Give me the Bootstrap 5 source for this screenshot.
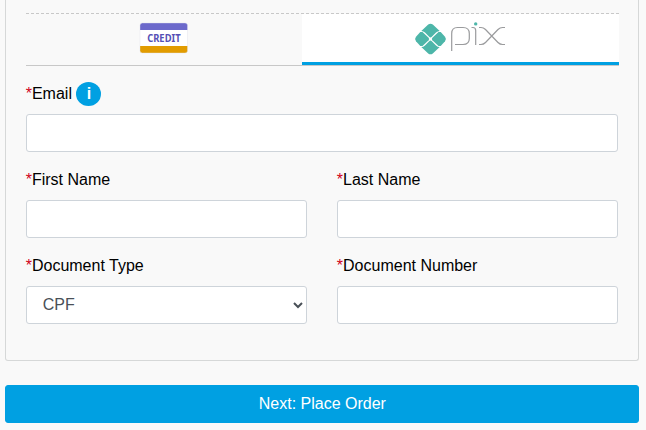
<!DOCTYPE html>
<html lang="en">
<head>
<meta charset="utf-8">
<meta name="viewport" content="width=device-width, initial-scale=1">
<title>Payment</title>
<link href="https://cdn.jsdelivr.net/npm/bootstrap@5.3.0/dist/css/bootstrap.min.css" rel="stylesheet">
<style>
body{font-family:"Liberation Sans",Arial,sans-serif;background:#f9f9f9;color:#000;overflow:hidden}
.checkout{width:634.3px;margin-left:4.7px}
.panel{height:361px;padding:13px 20px 0;border:1px solid #d6d8d8;border-top:0;border-radius:0 0 3px 3px}
.pay-tabs{width:593px;height:53px;border-top:1px dashed #c8c8c8;border-bottom:1px solid #c8c8c8;margin-bottom:16px}
.pay-tab{border:0;background:transparent;padding:0;display:flex;align-items:flex-start}
.pay-tab.credit{width:276px}
.pay-tab.pix{width:317px;background:#fff;border-bottom:3px solid #00a0e2}
.form-label{line-height:24px;color:#000}
.req{color:#d0021b}
.form-control{height:38px;border:1px solid #ced4da;border-radius:3px;color:#495057}
select.form-control{appearance:auto;background:#fff;padding-top:5px;padding-bottom:7px}
.info{width:25px;height:24px;background:#00a0e2;color:#fff;font-weight:700;font-size:16px;line-height:24px;padding-left:1px}
.fields{--bs-gutter-x:30px}
.btn-next{height:38px;margin-top:24px;background:#00a0e2;border-color:#00a0e2;color:#fff;border-radius:3px;padding-left:13px}
.credit-word{font:700 10.6px "Noto Sans","Open Sans",sans-serif}
</style>
</head>
<body>
<main class="checkout">
  <section class="panel">
    <div class="pay-tabs d-flex">
      <button type="button" class="pay-tab credit" aria-label="Credit">
        <svg width="276" height="48" viewBox="26 14 276 48">
          <clipPath id="cc"><rect x="140" y="23" width="47.500" height="30" rx="2.500"/></clipPath>
          <g clip-path="url(#cc)"><path fill="#fff" d="M140 23h48v30h-48z"/><path fill="#6c69cb" d="M140 23h48v7h-48z"/><path fill="#e29c00" d="M140 46h48v7h-48z"/></g>
          <rect x="140" y="23" width="47.500" height="30" rx="2.500" fill="none" stroke="#dddde8" stroke-width=".4"/>
          <text class="credit-word" x="163.900" y="41.500" text-anchor="middle" textLength="33.500" lengthAdjust="spacingAndGlyphs" fill="#5650b5">CREDIT</text>
        </svg>
      </button>
      <button type="button" class="pay-tab pix" aria-label="Pix">
        <svg width="317" height="48" viewBox="302 14 317 48" fill="none">
          <g fill="#4db6a9">
            <path d="M421.300 31 428.200 24.600Q430.500 22.700 432.800 24.600L439.700 31Q437.600 31 436 32.600L431.800 36.800Q430.500 38 429.200 36.800L425 32.600Q423.400 31 421.300 31Z"/>
            <path d="M421.300 47 428.200 53.400Q430.500 55.300 432.800 53.400L439.700 47Q437.600 47 436 45.400L431.800 41.200Q430.500 40 429.200 41.200L425 45.400Q423.400 47 421.300 47Z"/>
            <path d="M420.300 32H422.500L428.600 37.800Q429.800 39 428.600 40.200L422.500 46H420.300L416 41.200Q414.200 39 416 36.800Z"/>
            <path d="M440.700 32H438.500L432.400 37.800Q431.200 39 432.400 40.200L438.500 46H440.700L445 41.200Q446.800 39 445 36.800Z"/>
          </g>
          <g stroke="#9a9b9d" stroke-width="1.200">
            <path d="M451.700 51V33.500Q451.700 27.500 457.500 27.500H463Q469.300 27.500 469.300 33.500V38.500Q469.300 44.500 463 44.500H455"/>
            <path d="M471.500 27.500H473Q475.700 27.500 475.700 30.500V45"/>
            <path d="M479 27.500H481Q483.500 27.500 485.500 29.500L498 42.500Q500 44.500 502.500 44.500H505M479 44.500H481Q483.500 44.500 485.500 42.500L498 29.500Q500 27.500 502.500 27.500H505"/>
          </g>
          <circle cx="475.700" cy="23.900" r="1.700" fill="#4db6a9"/>
        </svg>
      </button>
    </div>
    <form>
      <div class="mb-3">
        <div class="d-flex mb-2"><label for="email" class="form-label mb-0"><span class="req">*</span>Email</label><span class="info rounded-circle text-center ms-1">i</span></div>
        <input id="email" class="form-control">
      </div>
      <div class="row fields">
        <div class="col-6 mb-3"><label for="first" class="form-label d-block"><span class="req">*</span>First Name</label><input id="first" class="form-control"></div>
        <div class="col-6 mb-3"><label for="last" class="form-label d-block"><span class="req">*</span>Last Name</label><input id="last" class="form-control"></div>
        <div class="col-6"><label for="doctype" class="form-label d-block"><span class="req">*</span>Document Type</label><select id="doctype" class="form-control"><option>CPF</option></select></div>
        <div class="col-6"><label for="docnum" class="form-label d-block"><span class="req">*</span>Document Number</label><input id="docnum" class="form-control"></div>
      </div>
    </form>
  </section>
  <button type="button" class="btn btn-next w-100">Next: Place Order</button>
</main>
<script src="https://cdn.jsdelivr.net/npm/bootstrap@5.3.0/dist/js/bootstrap.bundle.min.js"></script>
</body>
</html>
